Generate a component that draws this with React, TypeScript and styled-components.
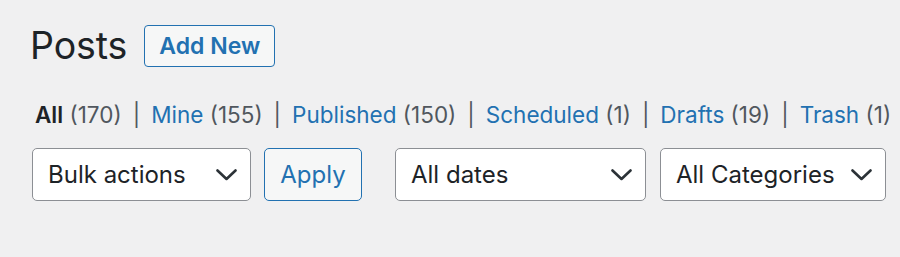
import React from "react";
import styled, { createGlobalStyle } from "styled-components";

const GlobalStyle = createGlobalStyle`
  html, body {
    margin: 0;
    padding: 0;
    background: #f0f0f1;
    overflow: hidden;
  }
  body {
    font-family: Inter, "Noto Sans", "Liberation Sans", sans-serif;
    color: #1d2327;
  }
`;

const Wrap = styled.div`
  padding: 25px 0 0 30px;
  width: 1200px;
`;

const Header = styled.div`
  display: flex;
  align-items: center;
  gap: 17px;
`;

const Title = styled.h1`
  margin: 0;
  font-size: 37.5px;
  font-weight: 400;
  line-height: 42px;
  color: #1d2327;
  letter-spacing: -0.1px;
`;

const AddNew = styled.a`
  display: inline-flex;
  align-items: center;
  justify-content: center;
  box-sizing: border-box;
  height: 42px;
  width: 131px;
  border: 1px solid #2271b1;
  border-radius: 4px;
  background: #f6f7f7;
  color: #2271b1;
  font-size: 23px;
  font-weight: 600;
  text-decoration: none;
`;

const StatusList = styled.ul`
  display: flex;
  align-items: center;
  list-style: none;
  margin: 35px 0 0 5px;
  padding: 0;
  font-size: 22.5px;
  line-height: 26px;
  color: #50575e;
  white-space: pre;
`;

const StatusItem = styled.li`
  display: flex;
  align-items: center;
`;

const StatusLink = styled.a<{ $current?: boolean }>`
  color: ${(p) => (p.$current ? "#1d2327" : "#2271b1")};
  font-weight: ${(p) => (p.$current ? 600 : 400)};
  text-decoration: none;
`;

const Count = styled.span`
  color: #50575e;
`;

const Sep = styled.span`
  color: #50575e;
  margin: 0 11px;
`;

const Toolbar = styled.div`
  display: flex;
  align-items: center;
  margin-top: 20px;
  margin-left: 2px;
`;

const Group = styled.div`
  display: flex;
  align-items: center;
  gap: 13px;
  margin-right: 33px;
`;

const SelectBox = styled.div<{ $w: number }>`
  display: flex;
  align-items: center;
  justify-content: space-between;
  box-sizing: border-box;
  width: ${(p) => p.$w}px;
  height: 53px;
  padding: 0 13px 0 15px;
  border: 1px solid #8c8f94;
  border-radius: 5px;
  background: #fff;
  font-size: 24px;
  color: #1d2327;
  flex-shrink: 0;
  white-space: nowrap;
  overflow: hidden;
`;

const ApplyButton = styled.button`
  box-sizing: border-box;
  width: 98px;
  height: 53px;
  border: 1px solid #2271b1;
  border-radius: 5px;
  background: #f6f7f7;
  color: #2271b1;
  font-family: inherit;
  font-size: 24px;
  padding: 0;
  flex-shrink: 0;
`;

const Filters = styled.div`
  display: flex;
  align-items: center;
  gap: 14px;
`;

const Chevron = () => (
  <svg width="21" height="12" viewBox="0 0 21 12" fill="none">
    <path
      d="M1.5 1.5 L10.5 10 L19.5 1.5"
      stroke="#2c3338"
      strokeWidth="2.6"
      strokeLinecap="round"
      strokeLinejoin="round"
    />
  </svg>
);

const Select = ({ label, width }: { label: string; width: number }) => (
  <SelectBox $w={width}>
    <span>{label}</span>
    <Chevron />
  </SelectBox>
);

const statuses = [
  { label: "All", count: 170, current: true },
  { label: "Mine", count: 155 },
  { label: "Published", count: 150 },
  { label: "Scheduled", count: 1 },
  { label: "Drafts", count: 19 },
  { label: "Trash", count: 1 },
];

export default function App() {
  return (
    <>
      <GlobalStyle />
      <Wrap>
        <Header>
          <Title>Posts</Title>
          <AddNew href="#">Add New</AddNew>
        </Header>
        <StatusList>
          {statuses.map((s, i) => (
            <StatusItem key={s.label}>
              <StatusLink href="#" $current={s.current}>
                {s.label}
              </StatusLink>
              <Count> ({s.count})</Count>
              {i < statuses.length - 1 && <Sep>|</Sep>}
            </StatusItem>
          ))}
        </StatusList>
        <Toolbar>
          <Group>
            <Select label="Bulk actions" width={219} />
            <ApplyButton>Apply</ApplyButton>
          </Group>
          <Filters>
            <Select label="All dates" width={251} />
            <Select label="All Categories" width={226} />
            <Select label="All formats" width={200} />
          </Filters>
        </Toolbar>
      </Wrap>
    </>
  );
}
